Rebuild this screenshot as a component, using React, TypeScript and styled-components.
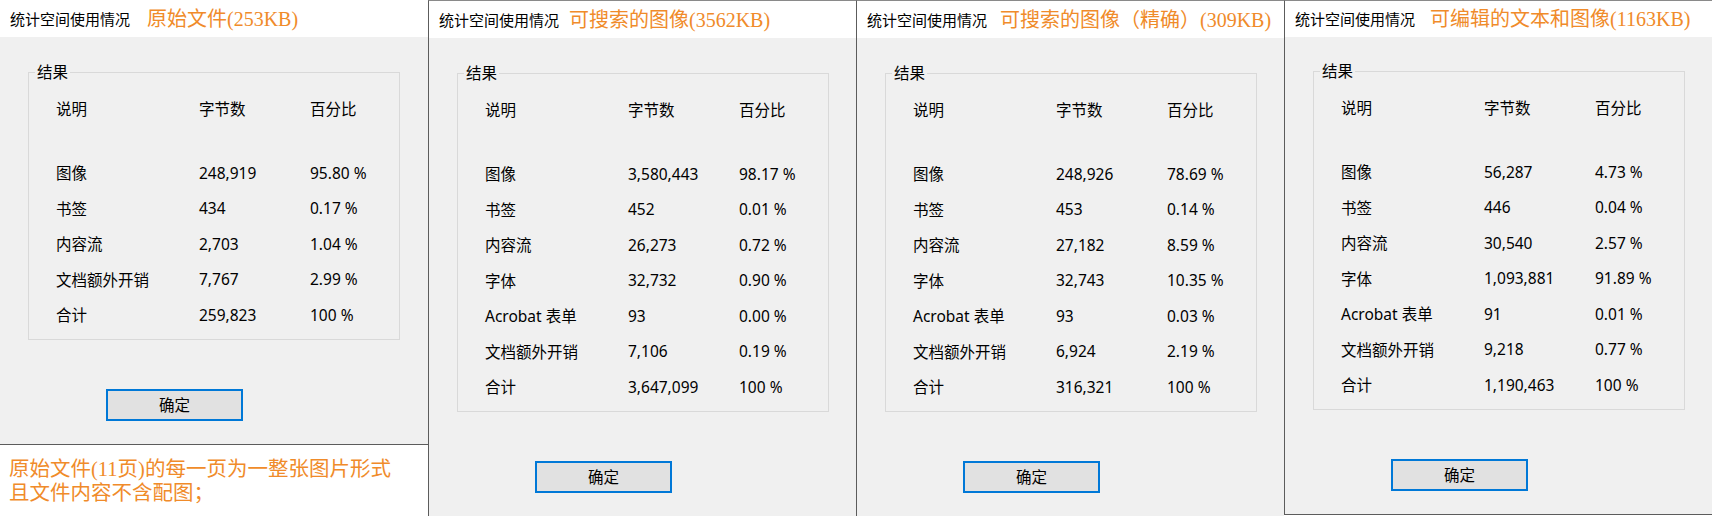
import React from 'react';

import styled, { createGlobalStyle } from 'styled-components';

type Row = [string, string, string];

type Panel = {
	label: string;
	gap: number;
	rows: Row[];
	titleHeight?: number;
	groupTop?: number;
	bottomBorder?: boolean;
	caption?: string[];
};

const ORANGE = '#f08b2a';

const panels: Panel[] = [
	{
		label: '原始文件(253KB)',
		gap: 17,
		rows: [
			['图像', '248,919', '95.80 %'],
			['书签', '434', '0.17 %'],
			['内容流', '2,703', '1.04 %'],
			['文档额外开销', '7,767', '2.99 %'],
			['合计', '259,823', '100 %']
		],
		bottomBorder: true,
		caption: ['原始文件(11页)的每一页为一整张图片形式', '且文件内容不含配图；']
	},
	{
		label: '可搜索的图像(3562KB)',
		gap: 10,
		rows: [
			['图像', '3,580,443', '98.17 %'],
			['书签', '452', '0.01 %'],
			['内容流', '26,273', '0.72 %'],
			['字体', '32,732', '0.90 %'],
			['Acrobat 表单', '93', '0.00 %'],
			['文档额外开销', '7,106', '0.19 %'],
			['合计', '3,647,099', '100 %']
		]
	},
	{
		label: '可搜索的图像（精确）(309KB)',
		gap: 13,
		rows: [
			['图像', '248,926', '78.69 %'],
			['书签', '453', '0.14 %'],
			['内容流', '27,182', '8.59 %'],
			['字体', '32,743', '10.35 %'],
			['Acrobat 表单', '93', '0.03 %'],
			['文档额外开销', '6,924', '2.19 %'],
			['合计', '316,321', '100 %']
		],
		bottomBorder: true
	},
	{
		label: '可编辑的文本和图像(1163KB)',
		gap: 15,
		rows: [
			['图像', '56,287', '4.73 %'],
			['书签', '446', '0.04 %'],
			['内容流', '30,540', '2.57 %'],
			['字体', '1,093,881', '91.89 %'],
			['Acrobat 表单', '91', '0.01 %'],
			['文档额外开销', '9,218', '0.77 %'],
			['合计', '1,190,463', '100 %']
		],
		titleHeight: 36,
		groupTop: 24,
		bottomBorder: true
	}
];

const GlobalStyle = createGlobalStyle`
	html, body {
		margin: 0;
		padding: 0;
		background: #fff;
	}

	body {
		width: 1712px;
		height: 516px;
		overflow: hidden;
		font-family: "Noto Sans", "Noto Sans CJK SC", sans-serif;
		color: #000;
	}
`;

const Page = styled.div`
	display: flex;
	align-items: flex-start;
	width: 1712px;
	height: 516px;
`;

const Column = styled.div`
	display: flex;
	flex-direction: column;
	width: 428px;
	flex: none;
`;

const Window = styled.div<{ $first: boolean; $bottom: boolean }>`
	display: flex;
	flex-direction: column;
	background: #f0f0f0;
	border-left: ${p => (p.$first ? 'none' : '1px solid #5c5c5c')};
	border-top: ${p => (p.$first ? 'none' : '1px solid #8a8a8a')};
	border-bottom: ${p => (p.$bottom ? '1px solid #5c5c5c' : 'none')};
`;

const TitleBar = styled.div<{ $height: number }>`
	display: flex;
	align-items: center;
	height: ${p => p.$height}px;
	padding-left: 10px;
	background: #fff;
`;

const TitleText = styled.span`
	font-size: 15px;
	line-height: 20px;
`;

const Highlight = styled.span<{ $gap: number }>`
	margin-left: ${p => p.$gap}px;
	font-family: "Liberation Serif", "Noto Sans CJK SC", serif;
	font-size: 20px;
	line-height: 24px;
	color: ${ORANGE};
	white-space: nowrap;
`;

const Body = styled.div`
	display: flex;
	flex-direction: column;
	padding-bottom: 23px;
`;

const GroupBox = styled.fieldset<{ $top: number }>`
	box-sizing: border-box;
	width: 372px;
	margin: ${p => p.$top}px 0 0 28px;
	padding: 9px 0 6px 0;
	border: 1px solid #d9d9d9;
	min-width: 0;
`;

const Legend = styled.legend`
	margin-left: 6px;
	padding: 0 2px;
	font-size: 15.5px;
	line-height: 20px;
`;

const Grid = styled.div<{ $gapBelow?: number }>`
	display: grid;
	grid-template-columns: 143px 111px 1fr;
	grid-auto-rows: 35.5px;
	align-items: center;
	padding-left: 27px;
	margin-bottom: ${p => p.$gapBelow ?? 0}px;
	font-size: 15.5px;
`;

const Cell = styled.div`
	white-space: nowrap;
`;

const OkButton = styled.button`
	box-sizing: border-box;
	width: 137px;
	height: 32px;
	margin: 49px 0 0 106px;
	border: 2px solid #0078d7;
	background: #e1e1e1;
	font-family: "Noto Sans", "Noto Sans CJK SC", sans-serif;
	font-size: 15.5px;
	color: #000;
	padding: 0;
`;

const Caption = styled.div`
	margin-top: 12px;
	padding-left: 9px;
	font-family: "Liberation Serif", "Noto Sans CJK SC", serif;
	font-size: 20.5px;
	line-height: 24px;
	color: ${ORANGE};
	white-space: nowrap;
`;

const StatsWindow: React.FC<{ panel: Panel; first: boolean }> = ({ panel, first }) => (
	<Window $first={first} $bottom={!!panel.bottomBorder}>
		<TitleBar $height={panel.titleHeight ?? 37}>
			<TitleText>统计空间使用情况</TitleText>
			<Highlight $gap={panel.gap}>{panel.label}</Highlight>
		</TitleBar>
		<Body>
			<GroupBox $top={panel.groupTop ?? 25}>
				<Legend>结果</Legend>
				<Grid $gapBelow={28.5}>
					<Cell>说明</Cell>
					<Cell>字节数</Cell>
					<Cell>百分比</Cell>
				</Grid>
				<Grid>
					{panel.rows.map(row => (
						<React.Fragment key={row[0]}>
							<Cell>{row[0]}</Cell>
							<Cell>{row[1]}</Cell>
							<Cell>{row[2]}</Cell>
						</React.Fragment>
					))}
				</Grid>
			</GroupBox>
			<OkButton>确定</OkButton>
		</Body>
	</Window>
);

const App: React.FC = () => (
	<>
		<GlobalStyle />
		<Page>
			{panels.map((panel, i) => (
				<Column key={panel.label}>
					<StatsWindow panel={panel} first={i === 0} />
					{panel.caption && (
						<Caption>
							{panel.caption.map(line => (
								<div key={line}>{line}</div>
							))}
						</Caption>
					)}
				</Column>
			))}
		</Page>
	</>
);

export default App;
